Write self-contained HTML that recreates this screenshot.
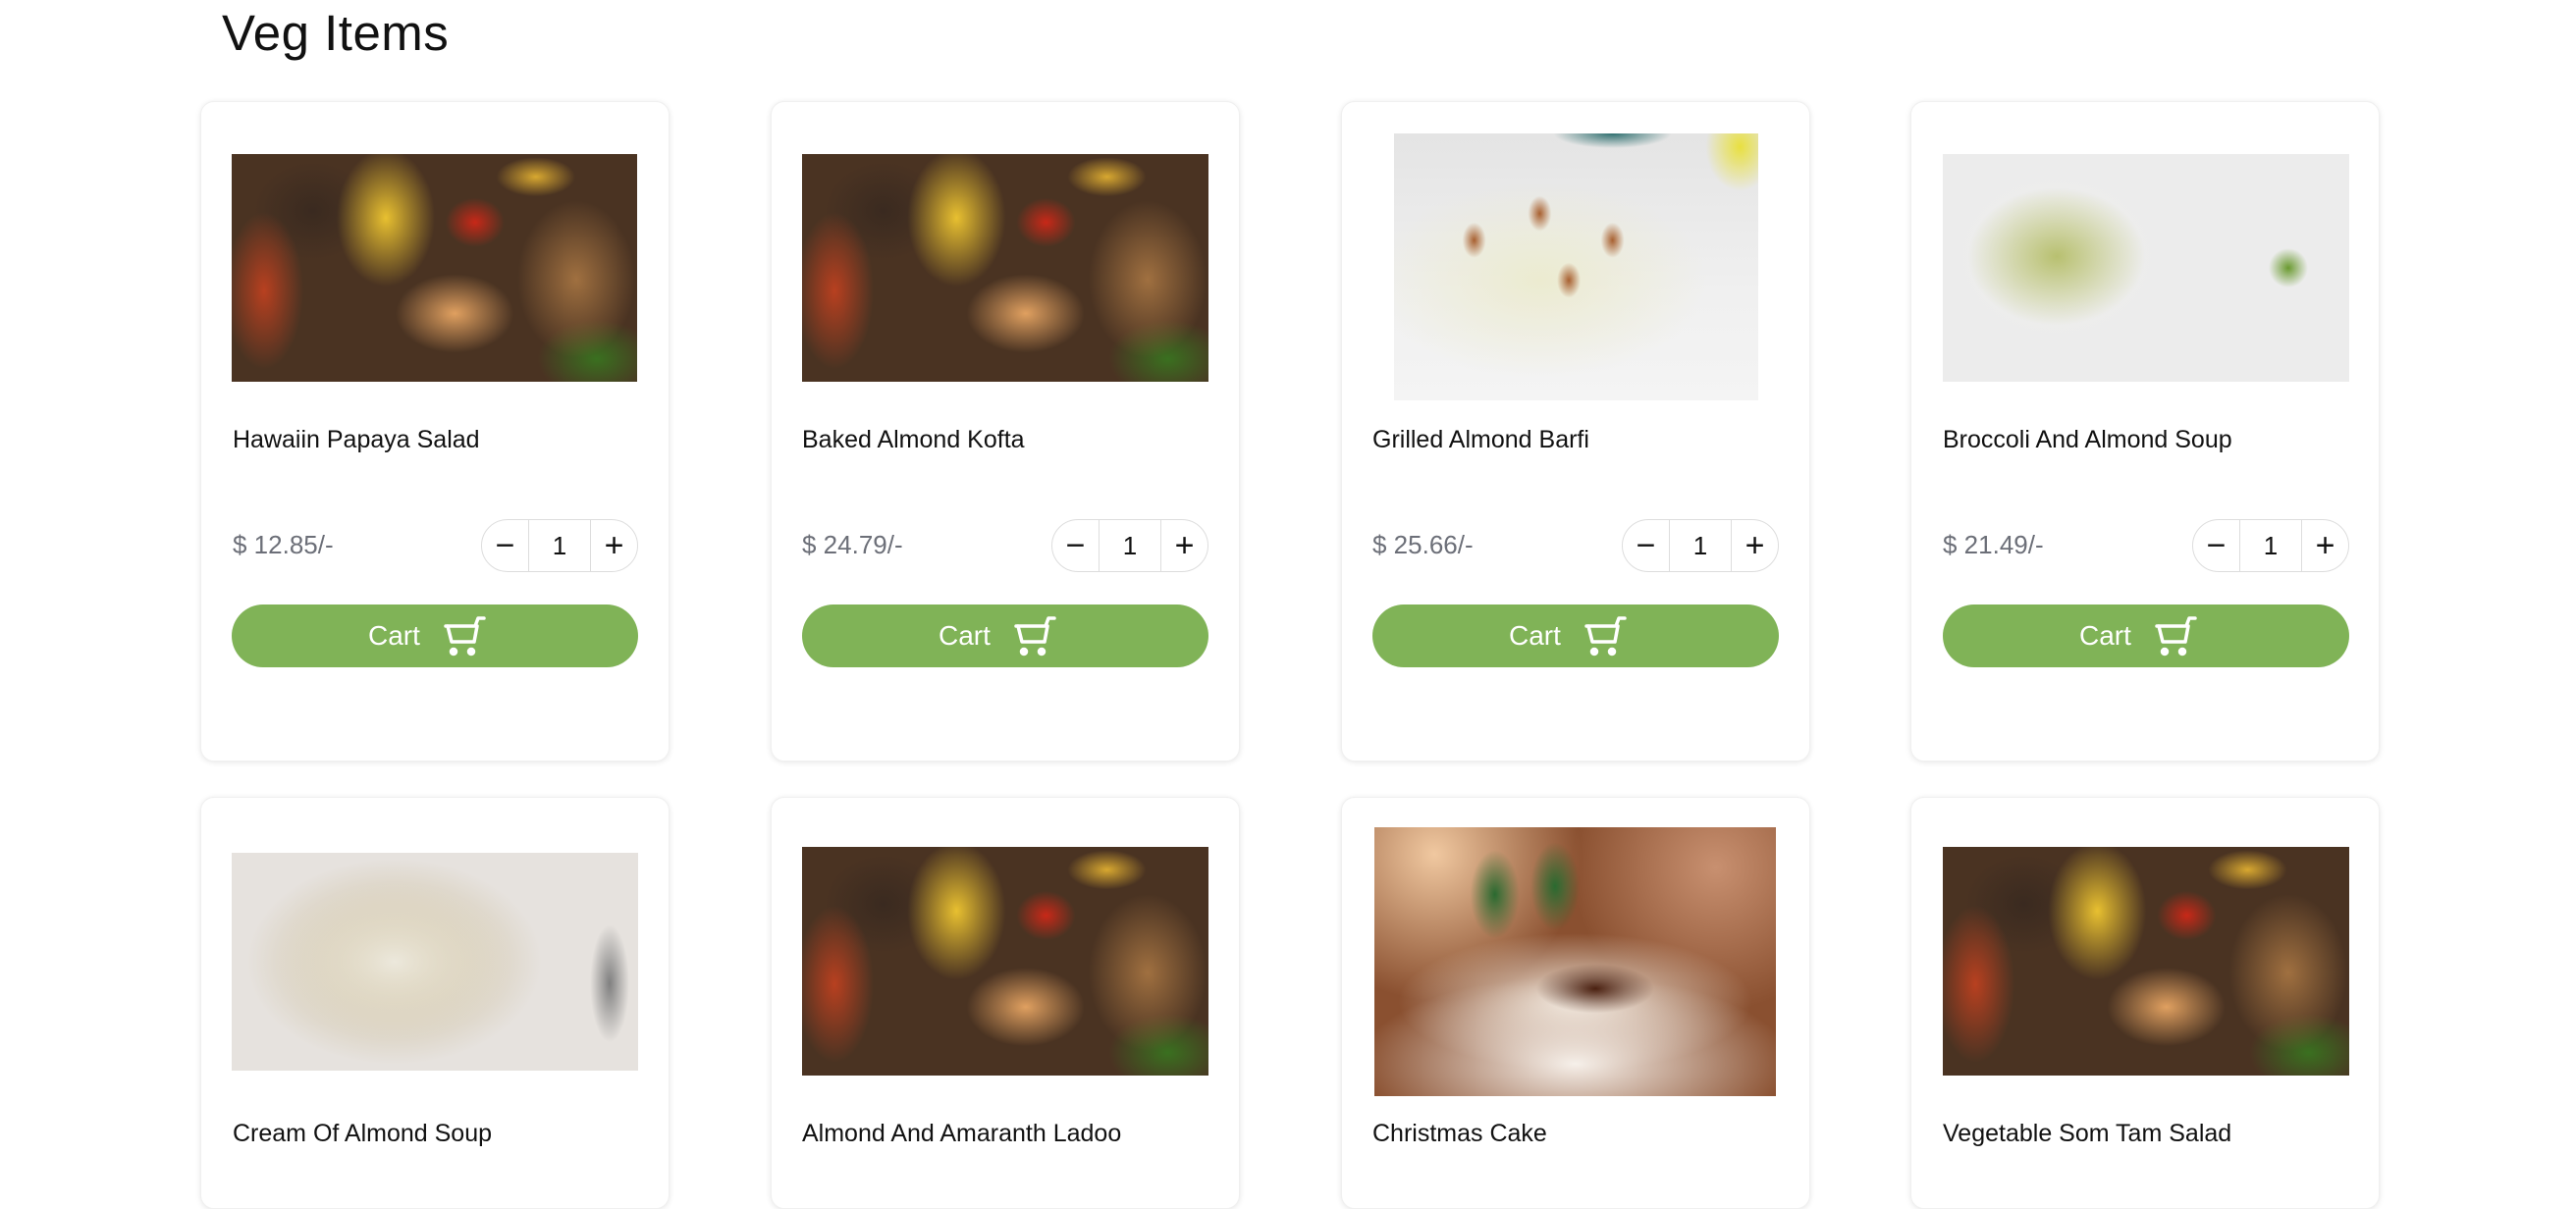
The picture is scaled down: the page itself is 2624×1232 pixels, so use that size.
<!DOCTYPE html>
<html><head><meta charset="utf-8"><style>
*{margin:0;padding:0;box-sizing:border-box}
body{width:2624px;height:1184px;background:#fff;overflow:hidden;position:relative;font-family:"Liberation Sans",sans-serif}
h1{position:absolute;left:226px;top:4px;font-size:51px;font-weight:400;color:#111;letter-spacing:0.5px}
.card{position:absolute;width:478px;height:673px;border-radius:14px;background:#fff;box-shadow:0 1px 6px rgba(0,0,0,0.10);border:1px solid #f0f0f0}
.img{position:absolute}
.grill{background:
radial-gradient(ellipse 60px 40px at 55% 70%,#e0a060,transparent),
radial-gradient(ellipse 50px 70px at 38% 28%,#e8c030,transparent),
radial-gradient(ellipse 30px 25px at 60% 30%,#c82818,transparent),
radial-gradient(ellipse 40px 20px at 75% 10%,#d8a830,transparent),
radial-gradient(ellipse 60px 80px at 85% 55%,#a07040,transparent),
radial-gradient(ellipse 40px 80px at 8% 60%,#b84020,transparent),
radial-gradient(ellipse 60px 50px at 20% 25%,#3a2a20,transparent),
radial-gradient(ellipse 60px 40px at 90% 90%,#3a7020,transparent),
#4a3322}
.name{position:absolute;font-size:25px;color:#111}
.price{position:absolute;font-size:26px;color:#6c6f78}
.qty{position:absolute;width:160px;height:54px;border:1.5px solid #ddd;border-radius:27px;display:flex}
.qty div{display:flex;align-items:center;justify-content:center;font-size:26px;color:#111}
.btn{position:absolute;width:414px;height:64px;border-radius:32px;background:#80b357;color:#fff;font-size:28px}
.btn span{position:absolute;left:139px;top:16px}
.btn svg{position:absolute;left:215px;top:12px}
</style></head><body>
<h1>Veg Items</h1>

<div class="card" style="left:204px;top:103px"></div>
<div class="card" style="left:785px;top:103px"></div>
<div class="card" style="left:1366px;top:103px"></div>
<div class="card" style="left:1946px;top:103px"></div>

<div class="img grill" style="left:236px;top:157px;width:413px;height:232px"></div>
<div class="img grill" style="left:817px;top:157px;width:414px;height:232px"></div>
<div class="img" style="left:1420px;top:136px;width:371px;height:272px;background:
radial-gradient(ellipse 12px 18px at 22% 40%,#a86030,transparent),
radial-gradient(ellipse 12px 18px at 40% 30%,#a86030,transparent),
radial-gradient(ellipse 12px 18px at 60% 40%,#a86030,transparent),
radial-gradient(ellipse 12px 18px at 48% 55%,#a86030,transparent),
radial-gradient(ellipse 170px 100px at 40% 55%,#ecebd0,transparent),
radial-gradient(ellipse 35px 45px at 95% 5%,#e8e040,transparent),
radial-gradient(ellipse 60px 15px at 60% 0%,#307070,transparent),
linear-gradient(#e4e4e4 0,#f0f0f0 60%,#f4f4f4)"></div>
<div class="img" style="left:1979px;top:157px;width:414px;height:232px;background:
radial-gradient(ellipse 90px 70px at 28% 45%,#b8c070,transparent),
radial-gradient(ellipse 110px 90px at 28% 45%,#f0f0ec,transparent),
radial-gradient(ellipse 20px 20px at 85% 50%,#6a9a30,transparent),
#ececec"></div>

<div class="name" style="left:237px;top:434px">Hawaiin Papaya Salad</div>
<div class="name" style="left:817px;top:434px">Baked Almond Kofta</div>
<div class="name" style="left:1398px;top:434px">Grilled Almond Barfi</div>
<div class="name" style="left:1979px;top:434px">Broccoli And Almond Soup</div>

<div class="price" style="left:237px;top:540px">$ 12.85/-</div>
<div class="price" style="left:817px;top:540px">$ 24.79/-</div>
<div class="price" style="left:1398px;top:540px">$ 25.66/-</div>
<div class="price" style="left:1979px;top:540px">$ 21.49/-</div>

<div class="qty" style="left:490px;top:529px"><div style="width:48px;border-right:1.5px solid #ddd;font-size:34px">−</div><div style="width:63px;border-right:1.5px solid #ddd">1</div><div style="width:47px;font-size:34px">+</div></div>
<div class="qty" style="left:1071px;top:529px"><div style="width:48px;border-right:1.5px solid #ddd;font-size:34px">−</div><div style="width:63px;border-right:1.5px solid #ddd">1</div><div style="width:47px;font-size:34px">+</div></div>
<div class="qty" style="left:1652px;top:529px"><div style="width:48px;border-right:1.5px solid #ddd;font-size:34px">−</div><div style="width:63px;border-right:1.5px solid #ddd">1</div><div style="width:47px;font-size:34px">+</div></div>
<div class="qty" style="left:2233px;top:529px"><div style="width:48px;border-right:1.5px solid #ddd;font-size:34px">−</div><div style="width:63px;border-right:1.5px solid #ddd">1</div><div style="width:47px;font-size:34px">+</div></div>

<div class="btn" style="left:236px;top:616px"><span>Cart</span><svg width="44" height="42" viewBox="0 0 44 42" fill="none" stroke="#fff" stroke-width="3.5" stroke-linecap="round" stroke-linejoin="round"><path d="M3 10h30l3-8h6"/><path d="M5 10l4 16h23l3-16"/><circle cx="11" cy="36" r="2.5" fill="#fff"/><circle cx="29" cy="36" r="2.5" fill="#fff"/></svg></div>
<div class="btn" style="left:817px;top:616px"><span>Cart</span><svg width="44" height="42" viewBox="0 0 44 42" fill="none" stroke="#fff" stroke-width="3.5" stroke-linecap="round" stroke-linejoin="round"><path d="M3 10h30l3-8h6"/><path d="M5 10l4 16h23l3-16"/><circle cx="11" cy="36" r="2.5" fill="#fff"/><circle cx="29" cy="36" r="2.5" fill="#fff"/></svg></div>
<div class="btn" style="left:1398px;top:616px"><span>Cart</span><svg width="44" height="42" viewBox="0 0 44 42" fill="none" stroke="#fff" stroke-width="3.5" stroke-linecap="round" stroke-linejoin="round"><path d="M3 10h30l3-8h6"/><path d="M5 10l4 16h23l3-16"/><circle cx="11" cy="36" r="2.5" fill="#fff"/><circle cx="29" cy="36" r="2.5" fill="#fff"/></svg></div>
<div class="btn" style="left:1979px;top:616px"><span>Cart</span><svg width="44" height="42" viewBox="0 0 44 42" fill="none" stroke="#fff" stroke-width="3.5" stroke-linecap="round" stroke-linejoin="round"><path d="M3 10h30l3-8h6"/><path d="M5 10l4 16h23l3-16"/><circle cx="11" cy="36" r="2.5" fill="#fff"/><circle cx="29" cy="36" r="2.5" fill="#fff"/></svg></div>

<div class="card" style="left:204px;top:812px;height:420px"></div>
<div class="card" style="left:785px;top:812px;height:420px"></div>
<div class="card" style="left:1366px;top:812px;height:420px"></div>
<div class="card" style="left:1946px;top:812px;height:420px"></div>

<div class="img" style="left:236px;top:869px;width:414px;height:222px;background:
radial-gradient(ellipse 120px 80px at 40% 50%,#ece8dc,transparent),
radial-gradient(ellipse 150px 105px at 40% 50%,#c8b890,transparent),
radial-gradient(ellipse 20px 60px at 93% 60%,#808080,transparent),
#e6e2de"></div>
<div class="img grill" style="left:817px;top:863px;width:414px;height:233px"></div>
<div class="img" style="left:1400px;top:843px;width:409px;height:274px;background:
radial-gradient(ellipse 60px 25px at 55% 60%,#4a2010,transparent),
radial-gradient(ellipse 25px 45px at 30% 25%,#2a6a30,transparent),
radial-gradient(ellipse 25px 45px at 45% 22%,#2a6a30,transparent),
radial-gradient(ellipse 220px 90px at 50% 88%,#f6f0ea,transparent),
radial-gradient(ellipse 180px 70px at 50% 65%,#f0e6da,transparent),
radial-gradient(circle at 15% 10%,#f0c8a0,transparent 35%),
radial-gradient(circle at 85% 15%,#c89070,transparent 35%),
#8a5030"></div>
<div class="img grill" style="left:1979px;top:863px;width:414px;height:233px"></div>

<div class="name" style="left:237px;top:1141px">Cream Of Almond Soup</div>
<div class="name" style="left:817px;top:1141px">Almond And Amaranth Ladoo</div>
<div class="name" style="left:1398px;top:1141px">Christmas Cake</div>
<div class="name" style="left:1979px;top:1141px">Vegetable Som Tam Salad</div>
</body></html>
